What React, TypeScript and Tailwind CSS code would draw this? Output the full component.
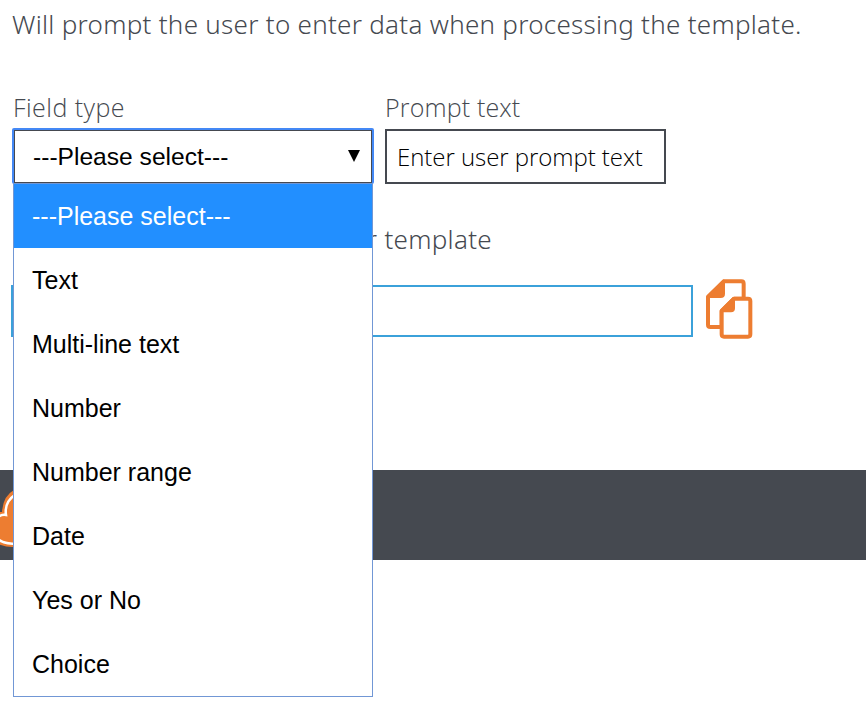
import React from "react";

const options = [
  "---Please select---",
  "Text",
  "Multi-line text",
  "Number",
  "Number range",
  "Date",
  "Yes or No",
  "Choice",
];

function CopyIcon() {
  return (
    <svg className="h-[60px] w-[47px] shrink-0" viewBox="48 43 141 180" fill="none" stroke="#ed7d31" strokeWidth="12" strokeLinejoin="round">
      <path d="M101 50H154Q161 50 161 57V102H132L95 139V187H61Q54 187 54 180V96Z" fill="white" />
      <path d="M101 49V87Q101 96 92 96H54Z" fill="#ed7d31" strokeWidth="8" />
      <path d="M132 102H174Q181 102 181 109V209Q181 216 174 216H102Q95 216 95 209V139Z" fill="white" />
      <path d="M131 102V131Q131 139 123 139H95Z" fill="#ed7d31" strokeWidth="8" />
    </svg>
  );
}

function CloudLogo() {
  return (
    <svg className="h-[90px] w-[60px]" viewBox="0 0 60 90" fill="#ed7d31">
      <path d="M-10 75V46Q-4 42 2 42Q3 26 14 20L30 16H50V77H12Q2 77 -10 70Z" />
      <path d="M-3 48Q1 44 6 45Q4 32 16 24M-3 68Q2 74 18 74" fill="none" stroke="white" strokeWidth="2.5" />
    </svg>
  );
}

export default function App() {
  return (
    <main className="h-[715px] w-[866px] overflow-hidden bg-white font-['Noto_Sans',sans-serif] text-[26px] font-light text-[#454950]">
      <section className="h-[470px] pl-3 pt-1">
        <p className="h-10 whitespace-nowrap leading-10 tracking-[0.28px]">Will prompt the user to enter data when processing the template.</p>
        <div className="mt-[45px] flex gap-3">
          <div className="relative w-[361px]">
            <label className="block h-[39px] pl-px font-['Open_Sans',sans-serif] text-[25px] leading-[37px] tracking-[0.45px]">Field type</label>
            <button className="flex h-14 w-[362px] items-center justify-between rounded-[2px] border-2 border-b-[1px] border-[#4488f5] bg-white font-['Liberation_Sans',sans-serif] text-[24.6px] font-normal text-black">
              <span className="flex h-full w-full items-center justify-between border border-[#454950] pl-[18px] pr-[11px] pt-px">
                <span>---Please select---</span>
                <svg className="mb-0.5 h-3 w-3" viewBox="0 0 12 12"><path d="M0 0H12L6 12Z" /></svg>
              </span>
            </button>
            <ul className="absolute left-px top-[94px] z-10 h-[514px] w-[360px] border border-[#7197d5] bg-white font-['Liberation_Sans',sans-serif] text-[25px] font-normal text-black">
              {options.map((option, i) => (
                <li key={option} className={i === 0 ? "h-16 bg-[#228fff] pl-[18px] leading-[65px] text-white" : "h-16 pl-[18px] leading-[65px]"}>{option}</li>
              ))}
            </ul>
          </div>
          <div className="w-[281px]">
            <label className="block h-10 font-['Open_Sans',sans-serif] text-[25px] leading-[37px] tracking-[0.15px]">Prompt text</label>
            <div className="flex h-[55px] items-center whitespace-nowrap border-2 border-[#454950] pt-px pl-[10px] font-['Open_Sans',sans-serif] text-[24px] tracking-[-0.05px] text-black">Enter user prompt text</div>
          </div>
        </div>
        <div className="mt-[35px] h-10 w-[480px] whitespace-nowrap text-right leading-10 tracking-[0.3px]">r template</div>
        <div className="mt-5 -ml-px flex items-start gap-[13px]">
          <div className="mt-[6px] h-[52px] w-[682px] border-2 border-[#3ba1da]" />
          <CopyIcon />
        </div>
      </section>
      <footer className="h-[90px] overflow-hidden bg-[#454950]"><CloudLogo /></footer>
    </main>
  );
}
